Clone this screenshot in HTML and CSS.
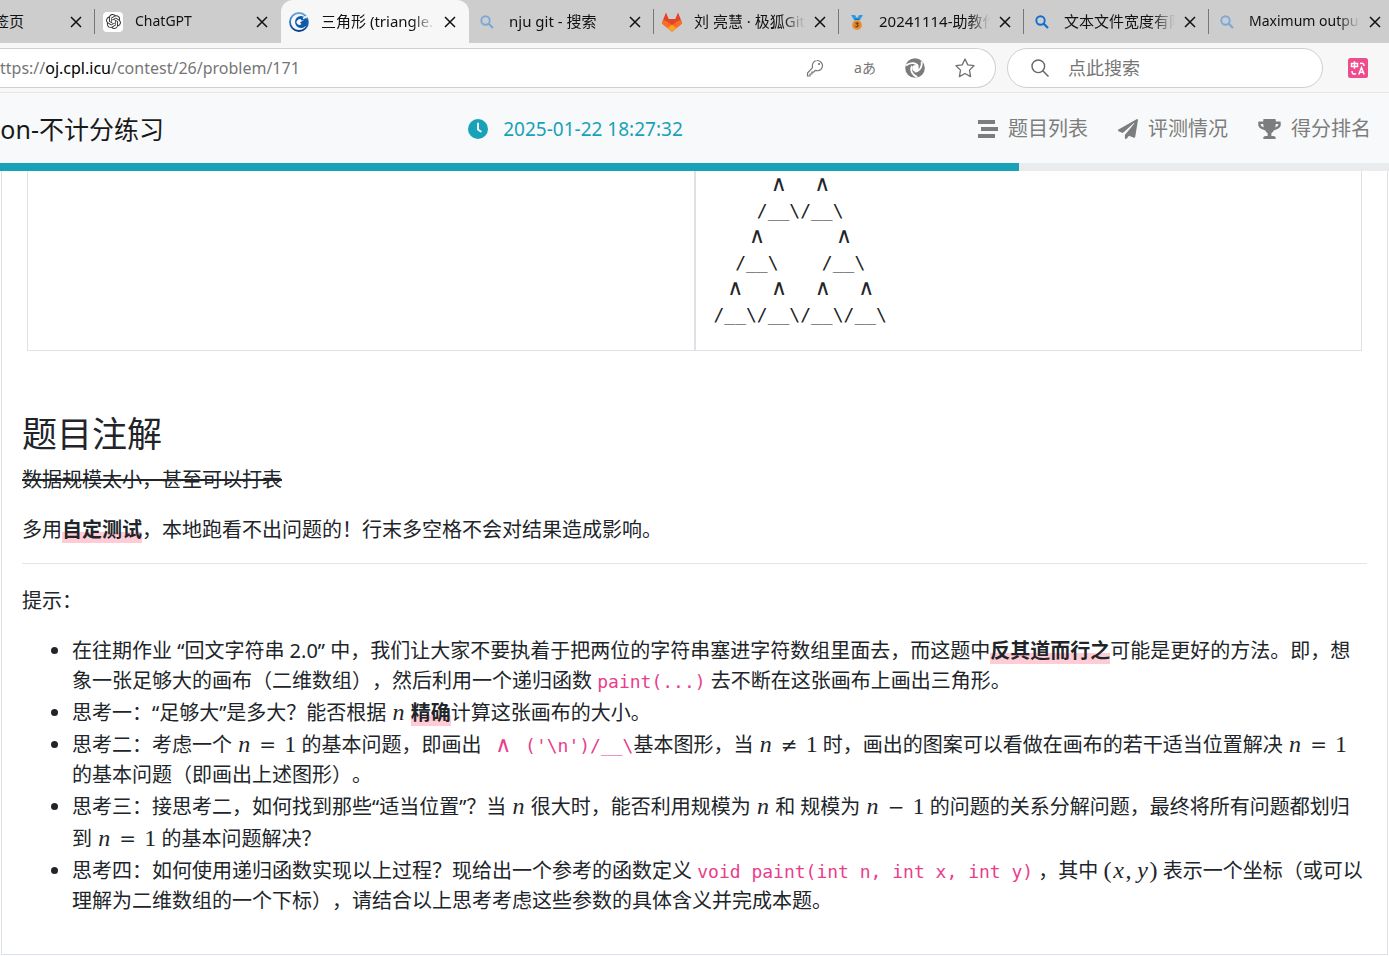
FILE: index.html
```html
<!DOCTYPE html>
<html lang="zh-CN">
<head>
<meta charset="utf-8">
<title>三角形 (triangle.c)</title>
<link rel="stylesheet" href="styles.css">
</head>
<body>
<svg class="defs" aria-hidden="true">
  <symbol id="i-close" viewBox="0 0 12 12"><path d="M1 1l10 10M11 1L1 11" fill="none" stroke="#111" stroke-width="1.5"/></symbol>
  <symbol id="i-mag" viewBox="0 0 14 14"><circle cx="5.5" cy="5.5" r="4.2" fill="none" stroke="currentColor" stroke-width="1.9"/><path d="M8.7 8.7l4.3 4.3" stroke="currentColor" stroke-width="2.2"/></symbol>
</svg>

<div class="tabs">
  <div class="tab tab-cut"><span class="title">签页</span><button class="close" aria-label="关闭"><svg><use href="#i-close"/></svg></button></div>
  <div class="tab tab-gpt">
    <span class="fav"><svg class="gpt" viewBox="0 0 24 24"><path d="M22.28 9.82a5.98 5.98 0 0 0-.51-4.91 6.05 6.05 0 0 0-6.51-2.9A6.07 6.07 0 0 0 4.98 4.18a5.98 5.98 0 0 0-4 2.9 6.05 6.05 0 0 0 .74 7.1 5.98 5.98 0 0 0 .51 4.91 6.05 6.05 0 0 0 6.52 2.9A5.98 5.98 0 0 0 13.26 24a6.06 6.06 0 0 0 5.77-4.21 5.99 5.99 0 0 0 4-2.9 6.06 6.06 0 0 0-.75-7.07zm-9.02 12.61a4.48 4.48 0 0 1-2.88-1.04l.14-.08 4.78-2.76a.79.79 0 0 0 .39-.68v-6.74l2.02 1.17v5.6a4.5 4.5 0 0 1-4.45 4.53zM3.6 18.3a4.47 4.47 0 0 1-.54-3.01l.14.08 4.79 2.76a.77.77 0 0 0 .78 0l5.84-3.37v2.4l-4.87 2.8A4.5 4.5 0 0 1 3.6 18.3zM2.34 7.9a4.49 4.49 0 0 1 2.37-1.98v5.68a.77.77 0 0 0 .39.68l5.81 3.35-2.02 1.17-4.83-2.79A4.5 4.5 0 0 1 2.34 7.9zm16.6 3.86L13.1 8.36l2.02-1.16 4.83 2.79a4.49 4.49 0 0 1-.68 8.1v-5.67a.79.79 0 0 0-.4-.67zm2.01-3.02l-.14-.09-4.78-2.78a.78.78 0 0 0-.78 0L9.41 9.23V6.9l4.83-2.79a4.5 4.5 0 0 1 6.71 4.66zM8.31 12.86l-2.02-1.16V6.07a4.5 4.5 0 0 1 7.38-3.45l-.15.08L8.74 5.46a.79.79 0 0 0-.39.68zm1.1-2.36L12 9l2.6 1.5v3L12 15l-2.6-1.5z" fill="#333"/></svg></span>
    <span class="title latin">ChatGPT</span><button class="close" aria-label="关闭"><svg><use href="#i-close"/></svg></button>
  </div>
  <div class="tab active">
    <span class="fav"><svg viewBox="0 0 20 20"><defs><linearGradient id="g1" x1="0" y1="0" x2="0" y2="1"><stop offset="0" stop-color="#62a5e0"/><stop offset=".5" stop-color="#2b74c4"/><stop offset="1" stop-color="#063f87"/></linearGradient></defs><circle cx="10" cy="10" r="9" fill="none" stroke="url(#g1)" stroke-width="1.8"/><path d="M16 5.500A6 6 0 1 0 16 14.500L18.500 13 19 8z" fill="#0d5aa7"/><path d="M15.500 7.500L12.800 8.600A2.800 2.800 0 1 0 12.500 12L11 10.500z" fill="#f7f7f7"/><path d="M14 6.500l5-2.500" stroke="#f7f7f7" stroke-width="1.600"/></svg></span>
    <span class="title">三角形 (triangle.c)</span><button class="close" aria-label="关闭"><svg><use href="#i-close"/></svg></button>
  </div>
  <div class="tab">
    <span class="fav pale"><svg class="mag"><use href="#i-mag"/></svg></span>
    <span class="title">nju git - 搜索</span><button class="close" aria-label="关闭"><svg><use href="#i-close"/></svg></button>
  </div>
  <div class="tab">
    <span class="fav"><svg viewBox="0 0 20 20"><path d="M4 .5L1 8 0 11.5 10 19.5 20 11.5 19 8 16 .5 13.3 7H6.7z" fill="#e24329"/><path d="M1 8l-1 3.2.9 1.3L10 19.5 14.4 16 5 9.2z" fill="#fc6d26"/><path d="M19 8l1 3.2-.9 1.3L10 19.5 5.600 16 15 9.200z" fill="#fc6d26"/><path d="M5.800 9.800L10 12.700l4.200-2.900L13.300 7H6.700z" fill="#e24329"/><path d="M10 12.700L5.600 16 10 19.500 14.400 16z" fill="#fca326"/></svg></span>
    <span class="title">刘 亮慧 · 极狐GitLab</span><button class="close" aria-label="关闭"><svg><use href="#i-close"/></svg></button>
  </div>
  <div class="tab">
    <span class="fav"><svg viewBox="0 0 20 20"><path d="M4 3h4l3 5H7zM16 3h-4L9 8h4z" fill="#2c9be8"/><path d="M8.5 6.5h3l1 2h-5z" fill="#1672b5"/><circle cx="10" cy="13" r="5" fill="#f0963c"/><circle cx="10" cy="13" r="3.6" fill="#d98232"/><path d="M8.6 11.1h2.6l-1.2 1.5c2.1.4 1.3 2.7-1.4 2.1" fill="none" stroke="#4a2b12" stroke-width="1"/></svg></span>
    <span class="title">20241114-助教作业</span><button class="close" aria-label="关闭"><svg><use href="#i-close"/></svg></button>
  </div>
  <div class="tab">
    <span class="fav blue"><svg class="mag"><use href="#i-mag"/></svg></span>
    <span class="title">文本文件宽度有限制</span><button class="close" aria-label="关闭"><svg><use href="#i-close"/></svg></button>
  </div>
  <div class="tab">
    <span class="fav pale"><svg class="mag"><use href="#i-mag"/></svg></span>
    <span class="title latin">Maximum output</span><button class="close" aria-label="关闭"><svg><use href="#i-close"/></svg></button>
  </div>
</div>

<div class="toolbar">
  <div class="address">
    <div class="url">ttps://<b>oj.cpl.icu</b>/contest/26/problem/171</div>
    <button aria-label="密码"><svg viewBox="0 0 20 20"><path d="M12 2.5a5.3 5.3 0 0 1 5.5 5.2c0 3-2.700 5.300-5.700 5l-1.600-.3-1.500 1.700H6.900v1.900H5v2H2.500v-3l5-5.300C6.500 6 8.800 2.500 12 2.500z" fill="none" stroke="#767676" stroke-width="1.200"/><circle cx="14" cy="6" r="1.100" fill="#767676"/></svg></button>
    <button class="lang" aria-label="翻译">aあ</button>
    <button aria-label="同步"><svg viewBox="0 0 20 20"><circle cx="10" cy="10" r="9.800" fill="#7b7b7b"/><circle cx="10.500" cy="10.300" r="3.200" fill="#fff"/><path id="arm" d="M13.200 8.500C11.500 5 6 3.500 1 7.500" fill="none" stroke="#fff" stroke-width="1.700"/><use href="#arm" transform="rotate(120 10 10)"/><use href="#arm" transform="rotate(240 10 10)"/></svg></button>
    <button aria-label="收藏"><svg viewBox="0 0 20 20"><path d="M10 1l2.800 5.900 6.200.8-4.500 4.400 1.100 6.500L10 15.500l-5.600 3.100 1.100-6.500L1 7.700l6.200-.8z" fill="none" stroke="#707070" stroke-width="1.300" stroke-linejoin="round"/></svg></button>
  </div>
  <label class="search">
    <svg viewBox="0 0 18 18"><circle cx="7.300" cy="7.300" r="6.300" fill="none" stroke="#666" stroke-width="1.400"/><path d="M11.800 11.800L17.500 17.500" stroke="#666" stroke-width="1.500"/></svg>
    <input type="text" placeholder="点此搜索" aria-label="点此搜索">
  </label>
  <button class="ext" aria-label="翻译扩展"><svg viewBox="0 0 20 20"><rect width="20" height="20" rx="2.500" fill="#ee4c8c"/><path d="M3.500 5.500h6v3h-6zM6.500 3.200v7.500M12 5.500c3-.8 4 .2 4 2.500M4 13c0 2.500 1 3.500 4 2.800M10.800 16.500L13.500 9.500l2.700 7M11.700 14.300h3.600" fill="none" stroke="#fff" stroke-width="1.500"/></svg></button>
</div>

<header class="bar">
  <div class="brand"><span>on-不计分练习</span></div>
  <div class="time"><svg viewBox="0 0 20 20"><circle cx="10" cy="10" r="10" fill="#17a2b8"/><path d="M10 4.500v6l2.800 2" fill="none" stroke="#f8f9fa" stroke-width="1.900" stroke-linecap="round"/></svg><time>2025-01-22 18:27:32</time></div>
  <nav>
    <a href="#"><svg width="21" height="20" viewBox="0 0 21 20"><path d="M1 1h17v4H1zM4 8h17v4H4zM1 15h17v4H1z" fill="#7c7d7d"/></svg>题目列表</a>
    <a href="#"><svg width="20" height="20" viewBox="0 0 512 512"><path d="M476 3.200L12.500 270.600c-18.100 10.400-15.800 35.600 2.200 43.200L121 358.400l287.300-253.200c5.500-4.900 13.300 2.600 8.600 8.300L176 407v80.500c0 23.600 28.500 32.900 42.500 15.800L282 426l124.600 52.200c14.200 6 30.400-2.900 33-18.200l72-432C515 7.800 493.300-6.800 476 3.200z" fill="#7c7d7d"/></svg>评测情况</a>
    <a href="#"><svg width="23" height="20" viewBox="0 0 576 512"><path d="M552 64H448V24c0-13.300-10.700-24-24-24H152c-13.300 0-24 10.700-24 24v40H24C10.700 64 0 74.700 0 88v56c0 35.700 22.500 72.400 61.900 100.700 31.500 22.700 69.800 37.100 110 41.700C203.300 338.500 240 360 240 360v72h-48c-35.300 0-64 20.700-64 56v12c0 6.600 5.400 12 12 12h296c6.600 0 12-5.400 12-12v-12c0-35.300-28.700-56-64-56h-48v-72s36.700-21.500 68.100-73.600c40.300-4.600 78.600-19 110-41.700 39.300-28.300 61.900-65 61.900-100.700V88c0-13.300-10.700-24-24-24zM99.300 192.800C74.900 175.200 64 155.600 64 144v-16h64.200c1 32.600 5.800 61.200 12.800 86.200-15.100-5.200-29.200-12.400-41.700-21.400zM512 144c0 16.100-17.700 36.100-35.300 48.800-12.500 9-26.700 16.200-41.800 21.400 7-25 11.800-53.600 12.800-86.200H512v16z" fill="#7c7d7d"/></svg>得分排名</a>
  </nav>
</header>
<div class="progress"><div class="fill" style="width:73.35%"></div></div>

<main class="card">
  <table class="samples">
    <tr>
      <td></td>
      <td><pre>     <i>∧</i>  <i>∧</i>
    /__\/__\
   <i>∧</i>      <i>∧</i>
  /__\    /__\
 <i>∧</i>  <i>∧</i>  <i>∧</i>  <i>∧</i>
/__\/__\/__\/__\</pre></td>
    </tr>
  </table>
  <h2>题目注解</h2>
  <p><del>数据规模太小，甚至可以打表</del></p>
  <p>多用<strong>自定测试</strong>，本地跑看不出问题的！行末多空格不会对结果造成影响。</p>
  <hr>
  <p>提示：</p>
  <ul>
    <li>在往期作业 “回文字符串 2.0” 中，我们让大家不要执着于把两位的字符串塞进字符数组里面去，而这题中<strong>反其道而行之</strong>可能是更好的方法。即，想象一张足够大的画布（二维数组），然后利用一个递归函数 <code>paint(...)</code> 去不断在这张画布上画出三角形。</li>
    <li>思考一：“足够大”是多大？能否根据 <span class="m"><var>n</var></span> <strong>精确</strong>计算这张画布的大小。</li>
    <li>思考二：考虑一个 <span class="m"><var>n</var><span class="op">=</span><span>1</span></span> 的基本问题，即画出<code> <i>∧</i> ('\n')/__\</code>基本图形，当 <span class="m"><var>n</var><span class="op">≠</span><span>1</span></span> 时，画出的图案可以看做在画布的若干适当位置解决 <span class="m"><var>n</var><span class="op">=</span><span>1</span></span> 的基本问题（即画出上述图形）。</li>
    <li>思考三：接思考二，如何找到那些“适当位置”？当 <span class="m"><var>n</var></span> 很大时，能否利用规模为 <span class="m"><var>n</var></span> 和 规模为 <span class="m"><var>n</var><span class="op">−</span><span>1</span></span> 的问题的关系分解问题，最终将所有问题都划归到 <span class="m"><var>n</var><span class="op">=</span><span>1</span></span> 的基本问题解决？</li>
    <li>思考四：如何使用递归函数实现以上过程？现给出一个参考的函数定义 <code>void paint(int n, int x, int y)</code> ，其中 <span class="m"><span>(</span><var>x</var><span class="comma">,</span><var>y</var><span>)</span></span> 表示一个坐标（或可以理解为二维数组的一个下标），请结合以上思考考虑这些参数的具体含义并完成本题。</li>
  </ul>
</main>
</body>
</html>
```

FILE: styles.css
```css
* { box-sizing: border-box; }
body {
  margin: 0;
  background: #fff;
  color: #212529;
  font: 20px/30px "Noto Sans", "Noto Sans CJK SC", sans-serif;
  text-spacing-trim: space-all;
  overflow: hidden;
}
button { border: 0; padding: 0; background: none; color: inherit; font: inherit; }
svg { display: block; flex: none; }
.defs { position: absolute; width: 0; height: 0; }

.tabs { display: flex; height: 43px; background: #cdcdcd; overflow: hidden; }
.tab {
  display: flex;
  flex: 0 0 185px;
  min-width: 0;
  align-items: center;
  padding: 0 13px 0 8px;
  background: linear-gradient(#777, #777) right 9px / 1px 25px no-repeat #cdcdcd;
  color: #111;
  font-size: 15px;
}
.tab-cut { flex-basis: 95px; padding-left: 0; }
.tab-cut .title { flex: 0 0 24px; display: flex; justify-content: flex-end; margin-right: auto; }
.tab-gpt { flex-basis: 186px; background: #cdcdcd; }
.active {
  flex-basis: 188px;
  background: #f7f7f7;
  border-radius: 12px 12px 0 0;
}
.fav { display: grid; place-items: center; flex: none; width: 20px; height: 20px; margin-right: 12px; }
.fav svg { width: 20px; height: 20px; }
.tab-gpt .fav { background: #fff; border-radius: 4px; }
.fav .gpt { width: 15px; height: 15px; }
.fav .mag { width: 14px; height: 14px; }
.pale { color: #7aa9d6; }
.blue { color: #0f6fcf; }
.title { flex: 1; min-width: 0; overflow: hidden; white-space: nowrap; line-height: 24px; padding-bottom: 2px; }
.latin { font-size: 14px; }
.tab:not(.tab-cut) .title { -webkit-mask-image: linear-gradient(90deg, #000 80%, transparent); mask-image: linear-gradient(90deg, #000 80%, transparent); }
.close { flex: none; margin-left: 9px; }
.close svg { width: 12px; height: 12px; }

.toolbar {
  display: flex;
  align-items: center;
  height: 50px;
  padding-right: 21px;
  background: #f7f7f7;
  border-bottom: 1px solid #e6e6e6;
}
.address, .search { display: flex; align-items: center; height: 40px; background: #fff; border: 1px solid #cfcfcf; }
.address { flex: 1; gap: 30px; padding-right: 20px; border-left: 0; border-radius: 0 20px 20px 0; }
.address svg { width: 20px; height: 20px; }
.address button { width: 20px; }
.url { flex: 1; min-width: 0; color: #767676; font-size: 16px; overflow: hidden; white-space: nowrap; }
.url b { color: #000; font-weight: 400; }
.address .lang { display: flex; justify-content: center; color: #767676; font-size: 14px; line-height: 20px; white-space: nowrap; }
.search { width: 316px; margin: 0 25px 0 11px; padding: 0 23px; gap: 19px; border-radius: 20px; }
.search svg { width: 18px; height: 18px; }
.search input { flex: 1; min-width: 0; border: 0; outline: 0; padding: 0; background: none; font: 18px/24px "Noto Sans", "Noto Sans CJK SC", sans-serif; }
.search input::placeholder { color: #767676; }
.ext svg { width: 20px; height: 20px; }

.bar { display: flex; align-items: center; justify-content: space-between; height: 70px; padding: 2px 18px 0 0; background: #f8f9fa; }
.brand { display: flex; justify-content: flex-end; width: 164px; overflow: hidden; white-space: nowrap; color: #191919; font-size: 25px; line-height: 38px; }
.brand span { flex: none; }
.time { display: flex; align-items: center; gap: 15px; padding-left: 10px; color: #17a2b8; font-size: 19px; }
.time svg { width: 20px; height: 20px; }
nav { display: flex; gap: 30px; }
nav a { display: flex; align-items: center; gap: 10px; color: #7c7d7d; text-decoration: none; }
.progress { height: 8px; background: #e9ecef; }
.fill { height: 100%; background: #17a2b8; }

.card { margin: 0 1px; padding: 0 20px 38px; border: solid #dee2e6; border-width: 0 1px 1px; }
.samples { width: calc(100% - 10px); margin: 0 5px; border-collapse: separate; border-spacing: 0; table-layout: fixed; }
.samples td { padding: 1px 18px 22px; border: solid #dee2e6; border-width: 0 1px 1px; vertical-align: top; }
pre, code { font-family: "DejaVu Sans Mono", monospace; font-size: 18px; }
pre { margin: 0; line-height: 26px; }
pre i, code i { display: inline-block; width: 22px; font: 22px/18px "DejaVu Sans", sans-serif; text-align: center; }
code { color: #e83e8c; line-height: 20px; white-space: pre-wrap; }
h2 { margin: 62px 0 10px; font-size: 35px; font-weight: 400; line-height: 42px; }
p { margin: 0 0 20px; }
del { text-decoration-thickness: 2px; }
strong { background: linear-gradient(transparent 60%, #ffccd5 60%); font-weight: 700; }
hr { margin: -2px 0 22px; border: 0; border-top: 1px solid #e5e5e5; }
ul { margin: 0; padding-left: 50px; }
.m { font: 24px/32px "Liberation Serif", serif; white-space: nowrap; }
.m var { display: inline-block; width: 14px; text-align: center; }
.op { display: inline-block; width: 33px; text-align: center; font: 20px/20px "DejaVu Serif", serif; }
.comma { margin-right: 4px; }
```
